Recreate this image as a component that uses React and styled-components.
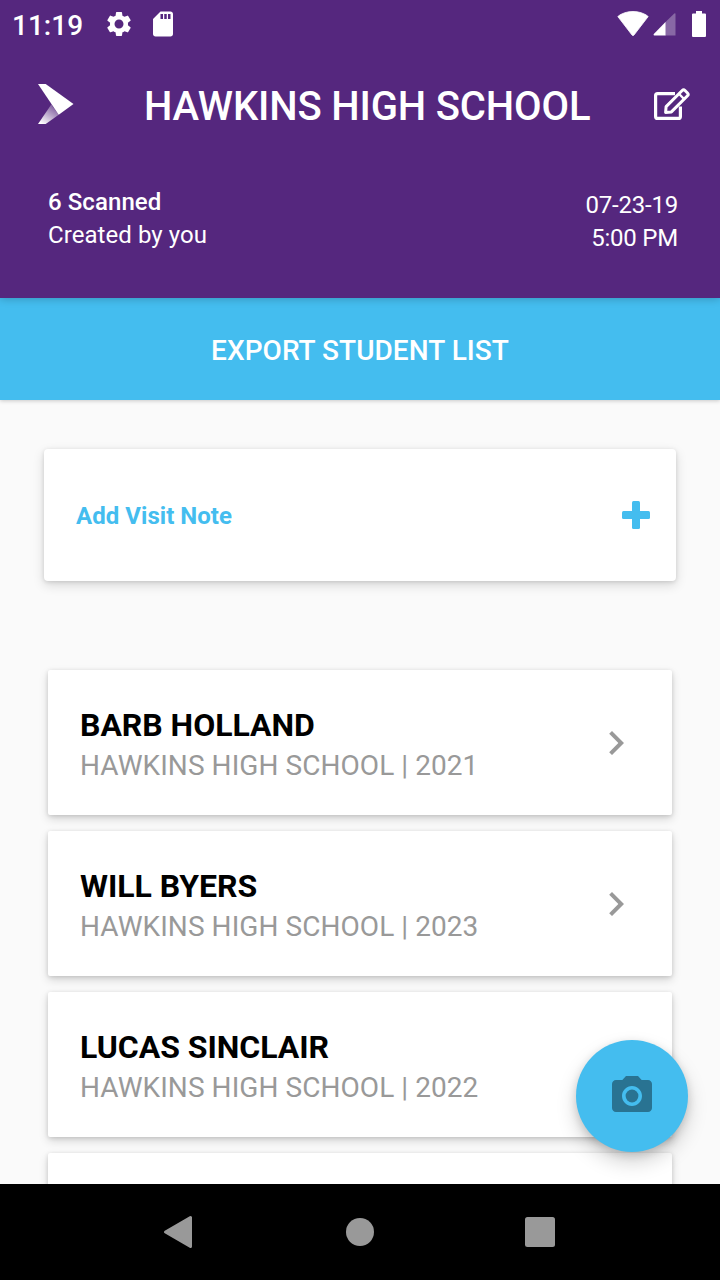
import React from 'react';
import styled, { createGlobalStyle } from 'styled-components';
import { MdSettings, MdSdCard, MdPhotoCamera, MdChevronRight } from 'react-icons/md';

const PURPLE = '#55277e';
const BLUE = '#44bdef';

const GlobalStyle = createGlobalStyle`
  * { box-sizing: border-box; }
  body { margin: 0; font-family: Roboto, "Liberation Sans", sans-serif; }
  svg { display: block; flex: none; }
  button { border: 0; padding: 0; background: none; font: inherit; color: inherit; }
`;

const Screen = styled.div`
  position: relative;
  display: flex;
  flex-direction: column;
  width: 720px;
  height: 1280px;
  overflow: hidden;
  background: #fafafa;
`;

const Header = styled.header`
  position: relative;
  z-index: 2;
  flex: none;
  height: 298px;
  background: ${PURPLE};
  color: #fff;
  box-shadow: 0 1px 8px rgba(0, 0, 0, 0.22);
`;

const StatusBar = styled.div`
  display: flex;
  align-items: center;
  height: 48px;
  padding: 0 14px 0 12px;
`;

const Clock = styled.span`
  width: 92px;
  padding-top: 4px;
  font-size: 28px;
  line-height: 32px;
  font-weight: 500;
`;

const StatusIcons = styled.div`
  display: flex;
  align-items: center;
  gap: 14px;
  flex: 1;
`;

const SystemIcons = styled.div`
  display: flex;
  align-items: center;
`;

const AppBar = styled.div`
  display: flex;
  align-items: center;
  height: 112px;
  padding: 0 26px 0 38px;
`;

const Title = styled.h1`
  flex: 1;
  margin: 0;
  padding: 5px 0 0 70px;
  font-size: 40px;
  line-height: 48px;
  font-weight: 500;
  letter-spacing: -0.15px;
  white-space: nowrap;
`;

const VisitInfo = styled.div`
  display: flex;
  justify-content: space-between;
  padding: 26px 42px 0 48px;
`;

const InfoColumn = styled.div`
  padding-top: ${(p) => (p.$end ? '3px' : '0')};
  text-align: ${(p) => (p.$end ? 'right' : 'left')};
  letter-spacing: ${(p) => (p.$end ? '-0.22px' : '0.07px')};
  font-size: 24px;
  line-height: 33px;
`;

const InfoLine = styled.div`
  font-weight: ${(p) => (p.$strong ? 500 : 400)};
`;

const ExportButton = styled.button`
  position: relative;
  z-index: 1;
  flex: none;
  height: 102px;
  padding-top: 3px;
  background: ${BLUE};
  color: #fff;
  font-size: 28px;
  font-weight: 500;
  letter-spacing: 0.04px;
  box-shadow: 0 1px 4px rgba(0, 0, 0, 0.2);
`;

const Content = styled.main`
  flex: 1;
  min-height: 0;
  overflow: hidden;
  padding: 49px 44px 0;
`;

const NoteCard = styled.button`
  display: flex;
  align-items: center;
  justify-content: space-between;
  width: 100%;
  height: 132px;
  padding: 0 26px 0 32px;
  border-radius: 4px;
  background: #fff;
  color: ${BLUE};
  font-size: 24px;
  font-weight: 700;
  letter-spacing: 0.04px;
  box-shadow: 0 4px 12px rgba(0, 0, 0, 0.14), 0 1px 4px rgba(0, 0, 0, 0.12);
`;

const NoteLabel = styled.span`
  padding-top: 2px;
`;

const StudentList = styled.div`
  display: flex;
  flex-direction: column;
  gap: 16px;
  padding: 89px 4px 0;
`;

const StudentCard = styled.article`
  display: flex;
  align-items: center;
  justify-content: space-between;
  height: 145px;
  flex: none;
  padding: 0 32px;
  border-radius: 2px;
  background: #fff;
  box-shadow: 0 4px 10px rgba(0, 0, 0, 0.15), 0 1px 4px rgba(0, 0, 0, 0.13);
`;

const StudentText = styled.div`
  padding-top: 3px;
`;

const StudentName = styled.h2`
  margin: 0;
  font-size: 32px;
  line-height: 42px;
  font-weight: 700;
  letter-spacing: -0.04px;
  color: #000;
`;

const StudentSchool = styled.p`
  margin: 0;
  font-size: 28px;
  line-height: 39px;
  letter-spacing: 0.06px;
  color: #999;
`;

const CameraButton = styled.button`
  position: absolute;
  z-index: 3;
  right: 32px;
  bottom: 128px;
  display: flex;
  align-items: center;
  justify-content: center;
  width: 112px;
  height: 112px;
  border-radius: 50%;
  background: ${BLUE};
  color: #297392;
  box-shadow: 0 10px 20px rgba(0, 0, 0, 0.18), 0 3px 8px rgba(0, 0, 0, 0.14);
`;

const NavBar = styled.nav`
  position: relative;
  z-index: 4;
  display: flex;
  align-items: center;
  justify-content: space-between;
  flex: none;
  height: 96px;
  padding: 0 160px;
  background: #000;
`;

const Logo = () => (
  <svg width="36" height="40" viewBox="0 0 36 40">
    <defs>
      <linearGradient id="fold" gradientUnits="userSpaceOnUse" x1="4" y1="40" x2="15" y2="23">
        <stop offset="0" stopColor="#fff" />
        <stop offset="1" stopColor="#fff" stopOpacity="0.3" />
      </linearGradient>
    </defs>
    <path d="M0 40L13.3 20.5L20.7 30.7L7.7 40Z" fill="url(#fold)" />
    <path d="M0 0H7.7L35.5 20L20.7 30.7Z" fill="#fff" />
  </svg>
);

const EditIcon = () => (
  <svg width="44" height="40" viewBox="0 0 44 40" fill="none" stroke="#fff" strokeWidth="3" strokeLinejoin="round">
    <path d="M25 9.600H7.600a2 2 0 0 0-2 2V32.400a2 2 0 0 0 2 2H28.400a2 2 0 0 0 2-2V22.500" strokeWidth="3.2" />
    <path d="M16.100 22.600L32.200 6.500a2 2 0 0 1 2.800 0L37.500 9a2 2 0 0 1 0 2.800L21.400 27.900L15.600 28.400Z" />
    <path d="M28.900 9.800L34.200 15.100" strokeWidth="2.200" />
  </svg>
);

const WifiIcon = () => (
  <svg width="32" height="26" viewBox="0 0 32 26">
    <path d="M.8 5.500C9-1.200 23-1.200 31.200 5.500L17 24Q16 25.200 15 24Z" fill="#fff" stroke="#fff" strokeWidth=".8" strokeLinejoin="round" />
  </svg>
);

const SignalIcon = () => (
  <svg width="23" height="23" viewBox="0 0 23 23">
    <path d="M21.300 .4Q22.500-.2 22.500 1V22.500H12V9.600Z" fill="#fff" fillOpacity=".3" />
    <path d="M12.500 9V22.500H1.300Q0 22.200 .8 21Z" fill="#fff" />
  </svg>
);

const BatteryIcon = () => (
  <svg width="14" height="26" viewBox="0 0 14 26">
    <path d="M4 0H10V2.600H13Q14 2.600 14 3.600V25Q14 26 13 26H1Q0 26 0 25V3.600Q0 2.600 1 2.600H4Z" fill="#fff" />
  </svg>
);

const PlusIcon = () => (
  <svg width="28" height="28" viewBox="0 0 28 28" fill="currentColor">
    <rect x="10" width="8" height="28" rx="1.500" />
    <rect y="10" width="28" height="8" rx="1.500" />
  </svg>
);

const BackIcon = () => (
  <svg width="36" height="36" viewBox="0 0 36 36">
    <path d="M5.500 18L30.500 3.500V32.500Z" fill="#999" stroke="#999" strokeWidth="3" strokeLinejoin="round" />
  </svg>
);

const HomeIcon = () => (
  <svg width="36" height="36" viewBox="0 0 36 36">
    <circle cx="18" cy="18" r="14" fill="#999" />
  </svg>
);

const RecentsIcon = () => (
  <svg width="36" height="36" viewBox="0 0 36 36">
    <rect x="1" y="3" width="30" height="30" rx="2.500" fill="#999" />
  </svg>
);

const SignalSlot = styled.div`
  padding: 1px 16px 0 4px;
`;

const ChevronSlot = styled.div`
  color: #999;
`;

const students = [
  { name: 'BARB HOLLAND', year: 2021 },
  { name: 'WILL BYERS', year: 2023 },
  { name: 'LUCAS SINCLAIR', year: 2022 },
];

export default function App() {
  return (
    <Screen>
      <GlobalStyle />
      <Header>
        <StatusBar>
          <Clock>11:19</Clock>
          <StatusIcons>
            <MdSettings size={30} />
            <MdSdCard size={30} />
          </StatusIcons>
          <SystemIcons>
            <WifiIcon />
            <SignalSlot>
              <SignalIcon />
            </SignalSlot>
            <BatteryIcon />
          </SystemIcons>
        </StatusBar>
        <AppBar>
          <Logo />
          <Title>HAWKINS HIGH SCHOOL</Title>
          <EditIcon />
        </AppBar>
        <VisitInfo>
          <InfoColumn>
            <InfoLine $strong>6 Scanned</InfoLine>
            <InfoLine>Created by you</InfoLine>
          </InfoColumn>
          <InfoColumn $end>
            <InfoLine>07-23-19</InfoLine>
            <InfoLine>5:00 PM</InfoLine>
          </InfoColumn>
        </VisitInfo>
      </Header>
      <ExportButton>EXPORT STUDENT LIST</ExportButton>
      <Content>
        <NoteCard>
          <NoteLabel>Add Visit Note</NoteLabel>
          <PlusIcon />
        </NoteCard>
        <StudentList>
          {students.map((s) => (
            <StudentCard key={s.name}>
              <StudentText>
                <StudentName>{s.name}</StudentName>
                <StudentSchool>HAWKINS HIGH SCHOOL | {s.year}</StudentSchool>
              </StudentText>
              <ChevronSlot>
                <MdChevronRight size={48} />
              </ChevronSlot>
            </StudentCard>
          ))}
          <StudentCard />
        </StudentList>
      </Content>
      <CameraButton aria-label="Scan">
        <MdPhotoCamera size={48} />
      </CameraButton>
      <NavBar>
        <BackIcon />
        <HomeIcon />
        <RecentsIcon />
      </NavBar>
    </Screen>
  );
}
